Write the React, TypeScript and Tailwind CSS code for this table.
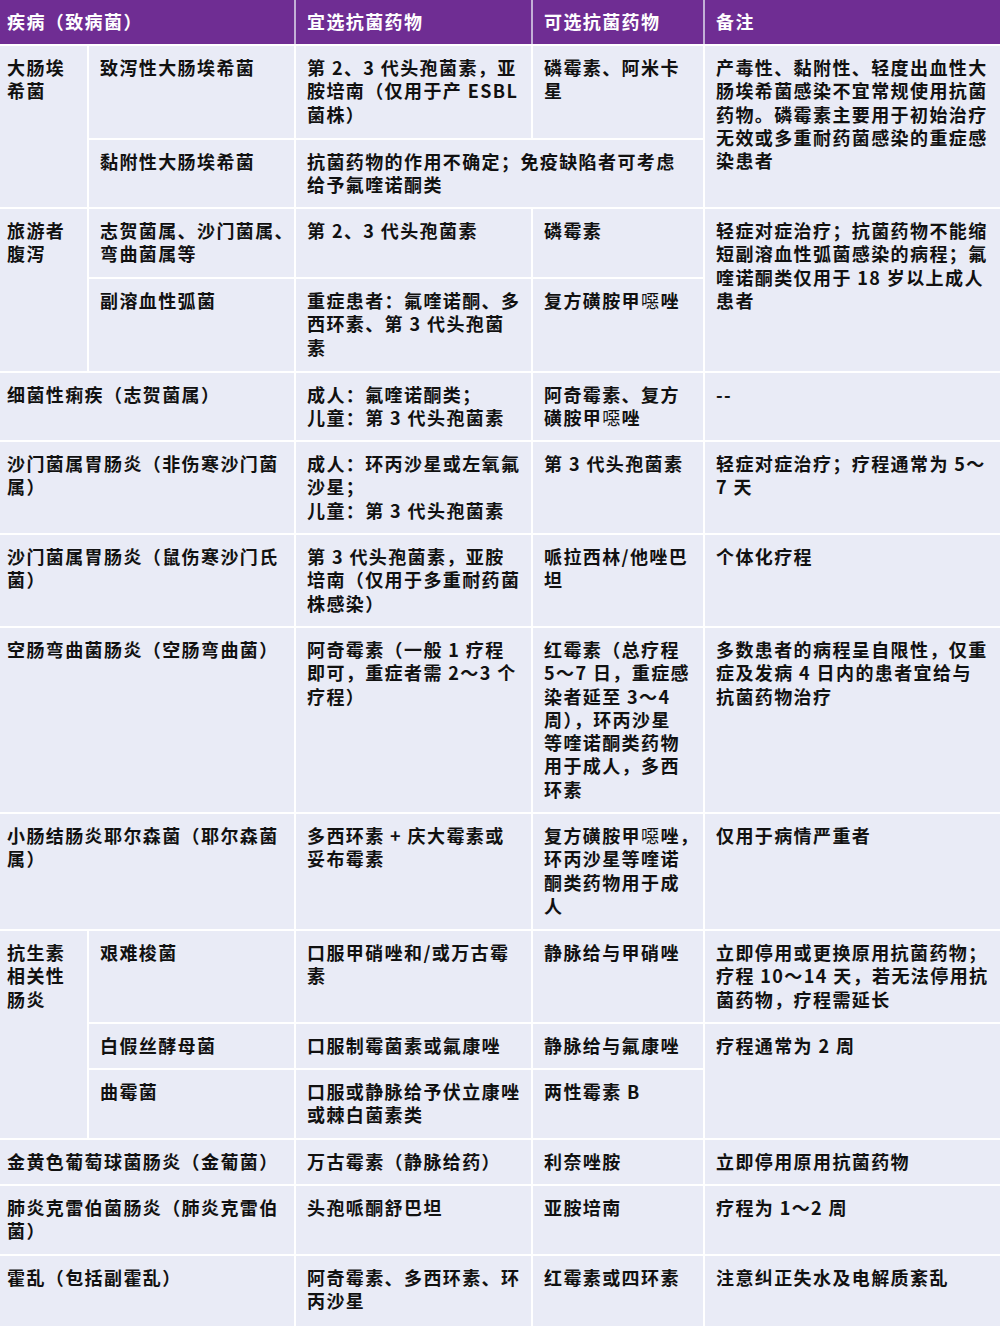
import type { ReactNode } from 'react'

// 噁 falls back to a lighter glyph in the reference
const E = () => <span className="font-normal">噁</span>

type CellProps = {
  lines: ReactNode[]
  className?: string
  first?: boolean
}

function Cell({ lines, className = '', first = false }: CellProps) {
  return (
    <div className={`bg-[#e9ebf6] pt-[10px] ${first ? 'pl-[7px]' : 'pl-[11px]'} ${className}`}>
      {lines.map((line, i) => (
        <div key={i} className="whitespace-nowrap">
          {line}
        </div>
      ))}
    </div>
  )
}

function HeaderCell({ children, first = false }: { children: ReactNode; first?: boolean }) {
  return (
    <div className={`flex items-center bg-[#6f2d93] text-white ${first ? 'pl-[7px]' : 'pl-[11px]'}`}>
      {children}
    </div>
  )
}

export default function App() {
  return (
    <div
      className="w-[1000px] h-[1326px] overflow-hidden bg-white text-[18px] leading-[23.3px] tracking-[1.4px] font-bold text-[#111]"
      style={{ fontFamily: '"Noto Sans CJK SC", "Noto Sans", sans-serif' }}
    >
      <div className="grid grid-cols-[87px_205px_235px_170px_295px] grid-rows-[44px_92px_67px_68px_92px_67px_91px_91px_184px_115px_91px_44px_68px_44px_68px_70px] gap-[2px] bg-white">
        {/* header */}
        <div className="col-span-5 grid grid-cols-[294px_235px_170px_295px] gap-x-[2px] bg-[#c3afd6]">
          <HeaderCell first>疾病（致病菌）</HeaderCell>
          <HeaderCell>宜选抗菌药物</HeaderCell>
          <HeaderCell>可选抗菌药物</HeaderCell>
          <HeaderCell>备注</HeaderCell>
        </div>

        {/* 大肠埃希菌 */}
        <Cell first className="row-span-2" lines={['大肠埃', '希菌']} />
        <Cell lines={['致泻性大肠埃希菌']} />
        <Cell lines={['第 2、3 代头孢菌素，亚', '胺培南（仅用于产 ESBL', '菌株）']} />
        <Cell lines={['磷霉素、阿米卡', '星']} />
        <Cell
          className="row-span-2"
          lines={[
            '产毒性、黏附性、轻度出血性大',
            '肠埃希菌感染不宜常规使用抗菌',
            '药物。磷霉素主要用于初始治疗',
            '无效或多重耐药菌感染的重症感',
            '染患者',
          ]}
        />
        <Cell lines={['黏附性大肠埃希菌']} />
        <Cell className="col-span-2" lines={['抗菌药物的作用不确定；免疫缺陷者可考虑', '给予氟喹诺酮类']} />

        {/* 旅游者腹泻 */}
        <Cell first className="row-span-2" lines={['旅游者', '腹泻']} />
        <Cell lines={['志贺菌属、沙门菌属、', '弯曲菌属等']} />
        <Cell lines={['第 2、3 代头孢菌素']} />
        <Cell lines={['磷霉素']} />
        <Cell
          className="row-span-2"
          lines={[
            '轻症对症治疗；抗菌药物不能缩',
            '短副溶血性弧菌感染的病程；氟',
            '喹诺酮类仅用于 18 岁以上成人',
            '患者',
          ]}
        />
        <Cell lines={['副溶血性弧菌']} />
        <Cell lines={['重症患者：氟喹诺酮、多', '西环素、第 3 代头孢菌', '素']} />
        <Cell lines={[<>复方磺胺甲<E />唑</>]} />

        {/* 细菌性痢疾 */}
        <Cell first className="col-span-2" lines={['细菌性痢疾（志贺菌属）']} />
        <Cell lines={['成人：氟喹诺酮类；', '儿童：第 3 代头孢菌素']} />
        <Cell lines={['阿奇霉素、复方', <>磺胺甲<E />唑</>]} />
        <Cell lines={['--']} />

        {/* 沙门菌属胃肠炎（非伤寒） */}
        <Cell first className="col-span-2" lines={['沙门菌属胃肠炎（非伤寒沙门菌', '属）']} />
        <Cell lines={['成人：环丙沙星或左氧氟', '沙星；', '儿童：第 3 代头孢菌素']} />
        <Cell lines={['第 3 代头孢菌素']} />
        <Cell lines={['轻症对症治疗；疗程通常为 5～', '7 天']} />

        {/* 沙门菌属胃肠炎（鼠伤寒） */}
        <Cell first className="col-span-2" lines={['沙门菌属胃肠炎（鼠伤寒沙门氏', '菌）']} />
        <Cell lines={['第 3 代头孢菌素，亚胺', '培南（仅用于多重耐药菌', '株感染）']} />
        <Cell lines={['哌拉西林/他唑巴', '坦']} />
        <Cell lines={['个体化疗程']} />

        {/* 空肠弯曲菌 */}
        <Cell first className="col-span-2" lines={['空肠弯曲菌肠炎（空肠弯曲菌）']} />
        <Cell lines={['阿奇霉素（一般 1 疗程', '即可，重症者需 2～3 个', '疗程）']} />
        <Cell
          lines={[
            '红霉素（总疗程',
            '5～7 日，重症感',
            '染者延至 3～4',
            '周），环丙沙星',
            '等喹诺酮类药物',
            '用于成人，多西',
            '环素',
          ]}
        />
        <Cell lines={['多数患者的病程呈自限性，仅重', '症及发病 4 日内的患者宜给与', '抗菌药物治疗']} />

        {/* 耶尔森菌 */}
        <Cell first className="col-span-2" lines={['小肠结肠炎耶尔森菌（耶尔森菌', '属）']} />
        <Cell lines={['多西环素 + 庆大霉素或', '妥布霉素']} />
        <Cell lines={[<>复方磺胺甲<E />唑，</>, '环丙沙星等喹诺', '酮类药物用于成', '人']} />
        <Cell lines={['仅用于病情严重者']} />

        {/* 抗生素相关性肠炎 */}
        <Cell first className="row-span-3" lines={['抗生素', '相关性', '肠炎']} />
        <Cell lines={['艰难梭菌']} />
        <Cell lines={['口服甲硝唑和/或万古霉', '素']} />
        <Cell lines={['静脉给与甲硝唑']} />
        <Cell
          lines={['立即停用或更换原用抗菌药物；', '疗程 10～14 天，若无法停用抗', '菌药物，疗程需延长']}
        />
        <Cell lines={['白假丝酵母菌']} />
        <Cell lines={['口服制霉菌素或氟康唑']} />
        <Cell lines={['静脉给与氟康唑']} />
        <Cell className="row-span-2" lines={['疗程通常为 2 周']} />
        <Cell lines={['曲霉菌']} />
        <Cell lines={['口服或静脉给予伏立康唑', '或棘白菌素类']} />
        <Cell lines={['两性霉素 B']} />

        {/* 金葡菌 */}
        <Cell first className="col-span-2" lines={['金黄色葡萄球菌肠炎（金葡菌）']} />
        <Cell lines={['万古霉素（静脉给药）']} />
        <Cell lines={['利奈唑胺']} />
        <Cell lines={['立即停用原用抗菌药物']} />

        {/* 肺炎克雷伯菌 */}
        <Cell first className="col-span-2" lines={['肺炎克雷伯菌肠炎（肺炎克雷伯', '菌）']} />
        <Cell lines={['头孢哌酮舒巴坦']} />
        <Cell lines={['亚胺培南']} />
        <Cell lines={['疗程为 1～2 周']} />

        {/* 霍乱 */}
        <Cell first className="col-span-2" lines={['霍乱（包括副霍乱）']} />
        <Cell lines={['阿奇霉素、多西环素、环', '丙沙星']} />
        <Cell lines={['红霉素或四环素']} />
        <Cell lines={['注意纠正失水及电解质紊乱']} />
      </div>
    </div>
  )
}
